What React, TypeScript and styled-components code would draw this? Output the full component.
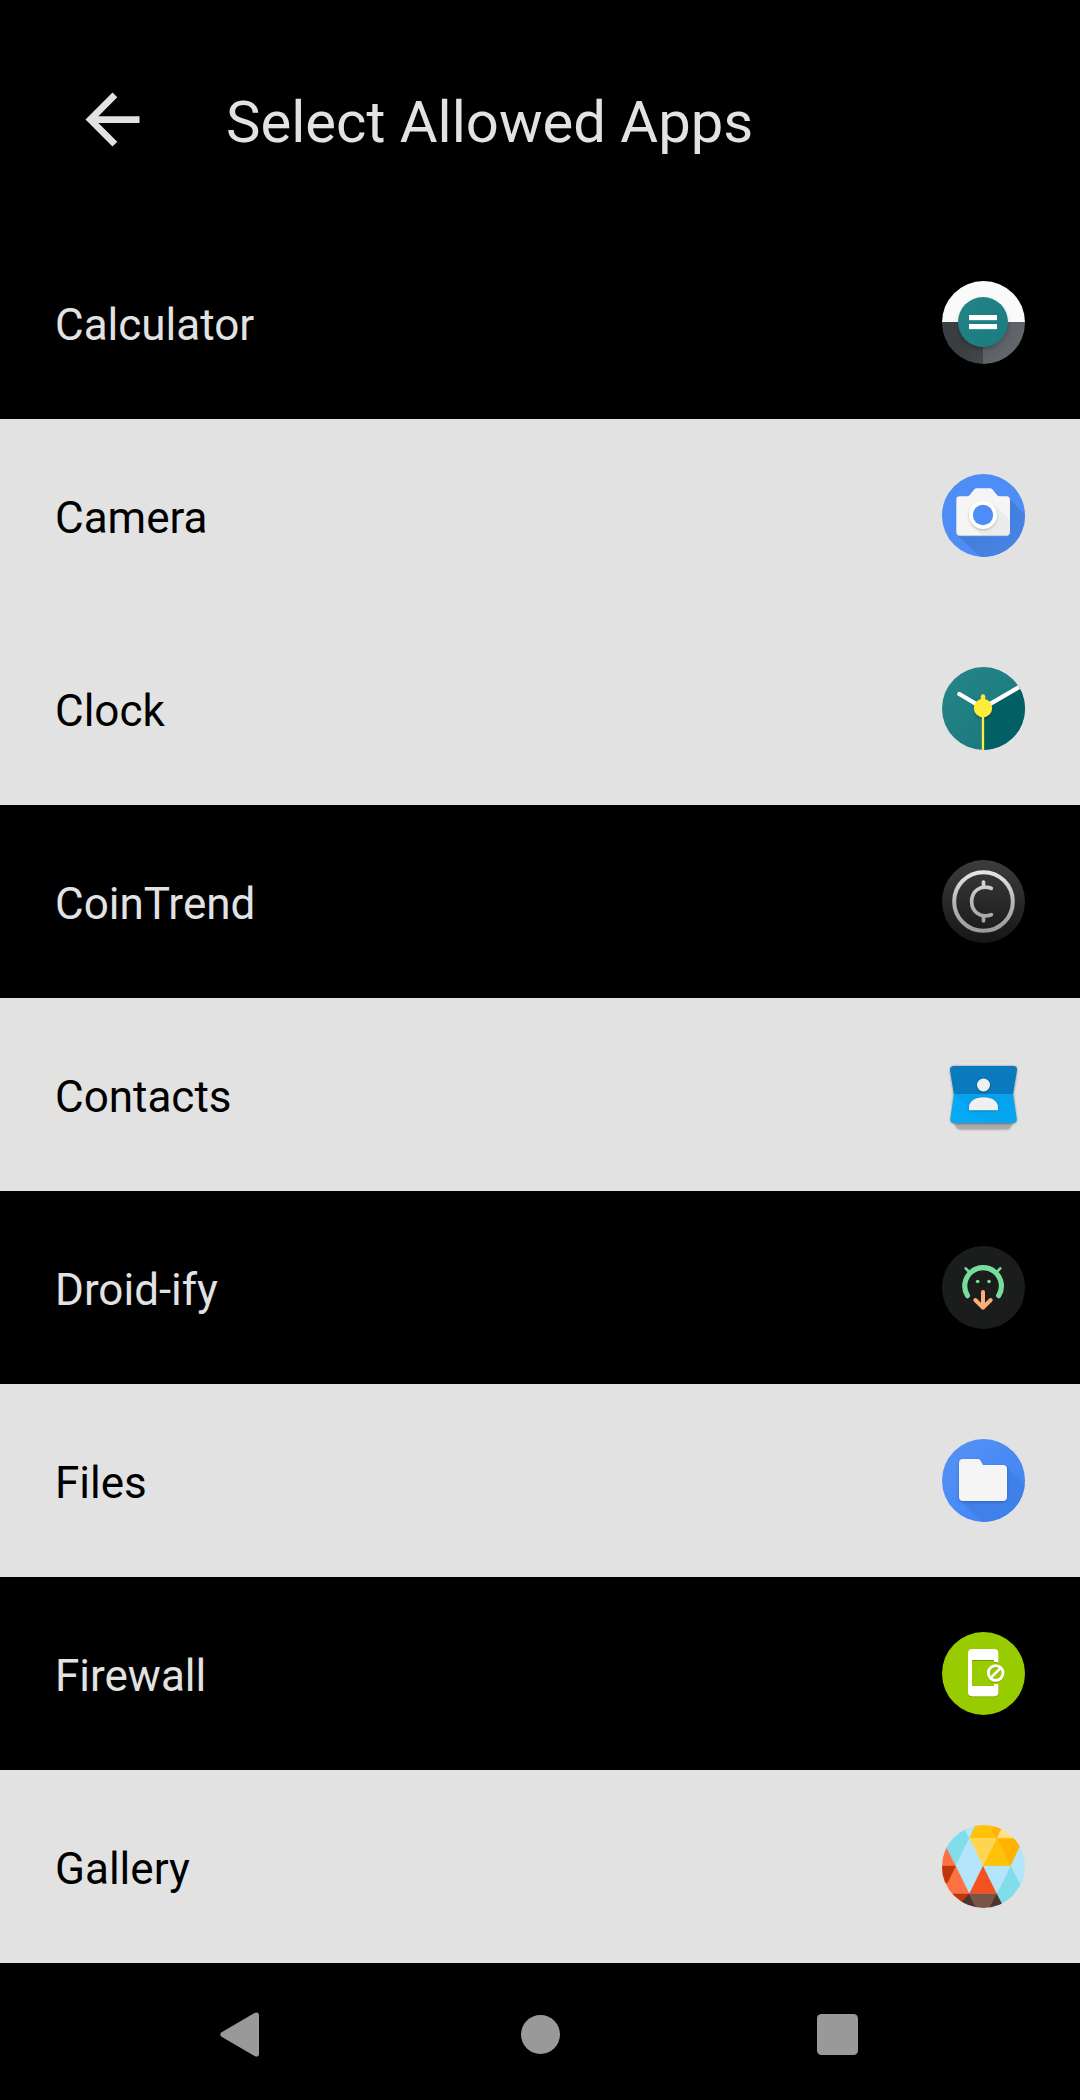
import React from "react";
import styled, { createGlobalStyle } from "styled-components";

const GlobalStyle = createGlobalStyle`
  body {
    margin: 0;
    background: #000;
    font-family: Roboto, "Noto Sans", sans-serif;
  }
`;

const Screen = styled.div`
  display: flex;
  flex-direction: column;
  width: 1080px;
  height: 2100px;
  overflow: hidden;
  background: #000;
  color: #e2e2e2;
`;

const TopBar = styled.header`
  box-sizing: border-box;
  display: flex;
  align-items: center;
  height: 226px;
  padding: 12px 72px 0;
  flex: none;
`;

const BackButton = styled.button`
  display: flex;
  padding: 0;
  margin: 0 73px 0 0;
  border: 0;
  background: none;
  color: inherit;
  svg {
    display: block;
    width: 81px;
    height: 81px;
  }
`;

const Title = styled.h1`
  margin: 5px 0 0;
  font-size: 58px;
  line-height: 76px;
  font-weight: 400;
  white-space: nowrap;
`;

const AppList = styled.ul`
  flex: none;
  margin: 0;
  padding: 0;
  list-style: none;
`;

const AppRow = styled.li<{ $selected: boolean }>`
  box-sizing: border-box;
  display: flex;
  align-items: center;
  justify-content: space-between;
  height: 193px;
  padding: 0 55px;
  background: ${(p) => (p.$selected ? "#e2e2e2" : "#000")};
  color: ${(p) => (p.$selected ? "#000" : "#e2e2e2")};
`;

const AppName = styled.span`
  padding-top: 4px;
  font-size: 44px;
  line-height: 60px;
`;

const IconSvg = styled.svg`
  display: block;
  width: 83px;
  height: 83px;
  overflow: visible;
`;

const NavBar = styled.nav`
  box-sizing: border-box;
  display: flex;
  align-items: center;
  justify-content: space-between;
  height: 137px;
  padding: 6px 222px 0 220px;
  flex: none;
`;

const NavGlyph = styled.svg<{ $w: number; $h: number }>`
  display: block;
  width: ${(p) => p.$w}px;
  height: ${(p) => p.$h}px;
  fill: #999;
`;

/* Every launcher icon shares one 249-unit square with a disc inscribed in it. */
const Icon = ({ children }: { children: React.ReactNode }) => (
  <IconSvg viewBox="36 33 249 249">{children}</IconSvg>
);

const Disc = ({ fill }: { fill: string }) => (
  <circle cx="160.5" cy="157.5" r="124.5" fill={fill} />
);

const DiscClip = ({ id }: { id: string }) => (
  <clipPath id={id}>
    <circle cx="160.5" cy="157.5" r="124.5" />
  </clipPath>
);

const CalculatorIcon = () => (
  <Icon>
    <defs>
      <DiscClip id="calc-clip" />
      <linearGradient id="calc-left" x1="0" y1="0" x2="1" y2="1">
        <stop offset="0" stopColor="#3c4043" />
        <stop offset=".5" stopColor="#3a3d40" />
        <stop offset="1" stopColor="#44484b" />
      </linearGradient>
      <linearGradient id="calc-right" x1="0" y1="0" x2="1" y2="1">
        <stop offset="0" stopColor="#54575c" />
        <stop offset=".6" stopColor="#62656b" />
      </linearGradient>
      <linearGradient id="calc-teal" x1="0" y1="0" x2="1" y2="1">
        <stop offset="0" stopColor="#238588" />
        <stop offset="1" stopColor="#1b7b7e" />
      </linearGradient>
      <filter id="calc-blur" x="-30%" y="-30%" width="160%" height="160%">
        <feGaussianBlur stdDeviation="6" />
      </filter>
    </defs>
    <g clipPath="url(#calc-clip)">
      <rect x="30" y="30" width="260" height="126" fill="#fafafa" />
      <rect x="30" y="156" width="129" height="130" fill="url(#calc-left)" />
      <rect x="159" y="156" width="130" height="130" fill="url(#calc-right)" />
      <circle cx="159" cy="164" r="74" fill="#000" opacity=".22" filter="url(#calc-blur)" />
    </g>
    <circle cx="159" cy="156" r="75" fill="url(#calc-teal)" />
    <rect x="117" y="135" width="84" height="15.5" fill="#fff" />
    <rect x="117" y="162" width="84" height="15.5" fill="#fff" />
  </Icon>
);

const CameraIcon = () => (
  <Icon>
    <defs>
      <DiscClip id="cam-clip" />
      <linearGradient id="cam-shade" gradientUnits="userSpaceOnUse" x1="170" y1="150" x2="250" y2="240">
        <stop offset="0" stopColor="#447cd8" />
        <stop offset="1" stopColor="#4683e3" />
      </linearGradient>
      <filter id="cam-blur" x="-30%" y="-30%" width="160%" height="160%">
        <feGaussianBlur stdDeviation="4" />
      </filter>
    </defs>
    <Disc fill="#4e8df5" />
    <path d="M232 103l70 68v130H172L82 216z" fill="url(#cam-shade)" clipPath="url(#cam-clip)" />
    <path
      d="M89 100h22q5 0 8-4l14-17q3-3 7-3h40q4 0 7 3l14 17q3 4 8 4h20q11 0 11 11v96q0 11-11 11H90q-11 0-11-11v-97q0-10 10-10z"
      fill="#f5f5f5"
    />
    <path d="M79 206q0 12 11 12h139q11 0 11-12" fill="none" stroke="#c8cbd2" strokeWidth="2" />
    <path d="M192 124l48 48v34q0 11-11 11h-73l-32-34z" fill="#000" opacity=".035" />
    <circle cx="159" cy="160" r="41" fill="#000" opacity=".25" filter="url(#cam-blur)" />
    <circle cx="159" cy="156" r="42" fill="#fff" />
    <circle cx="159" cy="156" r="30.5" fill="#4e8df5" />
  </Icon>
);

const ClockIcon = () => (
  <Icon>
    <defs>
      <DiscClip id="clock-clip" />
      <linearGradient id="clock-face" x1="0" y1="0" x2="1" y2="1">
        <stop offset="0" stopColor="#268689" />
        <stop offset="1" stopColor="#187579" />
      </linearGradient>
      <filter id="clock-blur" x="-30%" y="-30%" width="160%" height="160%">
        <feGaussianBlur stdDeviation="5" />
      </filter>
    </defs>
    <Disc fill="url(#clock-face)" />
    <g clipPath="url(#clock-clip)">
      <path d="M159 156L290 80v210H159z" fill="#006064" />
      <circle cx="159" cy="164" r="27" fill="#000" opacity=".22" filter="url(#clock-blur)" />
      <path d="M88 114l71 42L290 80" fill="none" stroke="#fff" strokeWidth="13" strokeLinecap="round" />
      <rect x="155.5" y="156" width="7" height="130" fill="#ffeb3b" />
    </g>
    <path d="M159 121v30" stroke="#ffeb3b" strokeWidth="13" strokeLinecap="round" />
    <circle cx="159" cy="156" r="27.5" fill="#ffeb3b" />
  </Icon>
);

const CoinTrendIcon = () => (
  <Icon>
    <defs>
      <linearGradient id="coin-bg" x1="0" y1="0" x2="0" y2="1">
        <stop offset="0" stopColor="#3c3c3e" />
        <stop offset=".5" stopColor="#29292a" />
        <stop offset="1" stopColor="#161616" />
      </linearGradient>
      <linearGradient id="coin-fg" gradientUnits="userSpaceOnUse" x1="0" y1="63" x2="0" y2="252">
        <stop offset="0" stopColor="#e8e8e8" />
        <stop offset=".5" stopColor="#b8b8b8" />
        <stop offset="1" stopColor="#999" />
      </linearGradient>
    </defs>
    <Disc fill="url(#coin-bg)" />
    <g fill="none" stroke="url(#coin-fg)">
      <circle cx="160.5" cy="157.5" r="88" strokeWidth="12" />
      <path
        d="M184 118C150 105 125 128 125 157.5s25 52 59 39.500M160.500 99v14M160.500 202v14"
        strokeWidth="11"
        strokeLinecap="round"
      />
    </g>
  </Icon>
);

const ContactsIcon = () => (
  <Icon>
    <defs>
      <linearGradient id="con-shadow" x1="0" y1="0" x2="0" y2="1">
        <stop offset="0" stopColor="#0a6ba8" />
        <stop offset="1" stopColor="#0a9fe9" />
      </linearGradient>
      <filter id="con-blur" x="-20%" y="-20%" width="140%" height="140%">
        <feGaussianBlur stdDeviation="3" />
      </filter>
    </defs>
    <path d="M73 71q6-15 16-15h143q10 0 16 15z" fill="#e3e3e3" stroke="#d2d2d2" strokeWidth="1.5" />
    <path d="M71 240l8 17q4 6 11 6h141q7 0 11-6l8-17z" fill="#aaa" filter="url(#con-blur)" />
    <path d="M73 240l7 15q4 7 11 7h139q7 0 11-7l7-15z" fill="#aaaaab" />
    <path
      d="M70 73h181q12 2 10 14l-11 70 10 73q1 13-10 15H70q-9-2-8-13l9-75-11-70q-1-12 10-14z"
      fill="#000"
      opacity=".4"
      filter="url(#con-blur)"
    />
    <path d="M71 72h180q11 1 10 12l-12 73H72L60 84q0-11 11-12z" fill="#0a7abf" />
    <path d="M72 156h177l11 74q1 12-10 13H71q-11-1-10-13z" fill="#05a9f4" />
    <path d="M72 156l6 3 82 84h90q11-1 10-13l-11-74z" fill="url(#con-shadow)" opacity=".12" />
    <g fill="#000" opacity=".3" filter="url(#con-blur)">
      <circle cx="160.5" cy="131" r="20" />
      <path d="M117 206c0-28 19-39 43.500-39s43.500 11 43.500 39z" />
    </g>
    <circle cx="160.5" cy="129" r="19.5" fill="#f0f0f0" />
    <path d="M117 205v-9c0-18 18-30 43.500-30s43.500 12 43.500 30v9z" fill="#f0f0f0" />
  </Icon>
);

const DroidifyIcon = () => (
  <Icon>
    <Disc fill="#1b1d1c" />
    <g fill="none" stroke="#77dc9d" strokeLinecap="round">
      <path d="M112.500 182A55 55 0 1 1 206 182" strokeWidth="15.5" />
      <path d="M107 100l12 12M211 100l-12 12" strokeWidth="8" />
    </g>
    <circle cx="143" cy="139.5" r="5.5" fill="#77dc9d" />
    <circle cx="177" cy="139.5" r="5.5" fill="#77dc9d" />
    <path
      d="M159 171v47M136 195l23 23 23-23"
      fill="none"
      stroke="#faaf77"
      strokeWidth="12"
      strokeLinecap="round"
      strokeLinejoin="round"
    />
  </Icon>
);

const FOLDER =
  "M99 93h45q4 0 7 4l8 14h60q12 0 12 12v84q0 12-12 12H99q-12 0-12-12V105q0-12 12-12z";

const FilesIcon = () => (
  <Icon>
    <defs>
      <DiscClip id="files-clip" />
      <linearGradient id="files-bg" x1="0.1" y1="0.1" x2=".8" y2=".8">
        <stop offset="0" stopColor="#5491f5" />
        <stop offset="1" stopColor="#4285f4" />
      </linearGradient>
      <filter id="files-blur" x="-20%" y="-20%" width="140%" height="140%">
        <feGaussianBlur stdDeviation="4" />
      </filter>
    </defs>
    <Disc fill="url(#files-bg)" />
    <path d="M228 114l70 68v120H174L88 214z" fill="#4081e9" clipPath="url(#files-clip)" />
    <path d={FOLDER} transform="translate(0 4)" fill="#1a3f85" opacity=".4" filter="url(#files-blur)" />
    <path d={FOLDER} fill="#f5f5f5" />
  </Icon>
);

const FirewallIcon = () => (
  <Icon>
    <defs>
      <filter id="fw-shadow" x="-20%" y="-20%" width="140%" height="140%">
        <feDropShadow dx="0" dy="2" stdDeviation="2" floodColor="#000" floodOpacity=".35" />
      </filter>
    </defs>
    <Disc fill="#99cc00" />
    <g filter="url(#fw-shadow)">
      <path
        d="M127 84h65q13 0 13 13v27q-6-2-13-1v-6h-66v78h66v-6q7 1 13-1v25q0 13-13 13h-65q-13 0-13-13V97q0-13 13-13z"
        fill="#fff"
      />
      <circle cx="197" cy="156" r="22" fill="none" stroke="#fff" strokeWidth="8.5" />
      <path d="M183 170l28-28" stroke="#fff" strokeWidth="8" />
    </g>
  </Icon>
);

const GALLERY_FACETS: [string, string][] = [
  ["M104 45L84 20 30 60 30 102 49 102 77 156 118 73z", "#80deea"],
  ["M104 45L118 25 140 25 118 73z", "#b3e5fc"],
  ["M140 25H220L201 73H118z", "#ffc20d"],
  ["M196 25H222L213 47 201 73 186 50z", "#ffb300"],
  ["M215 44L250 50 260 73H201z", "#ffe082"],
  ["M118 73H201L159 156z", "#ffd54f"],
  ["M201 73L242 156H159z", "#ffc10a"],
  ["M201 73H262L272 95 242 156z", "#ffb300"],
  ["M270 97L300 110V240L270 213 242 156z", "#b3e5fc"],
  ["M242 156L271 213 216 290 200 239z", "#80deea"],
  ["M159 156H242L200 239z", "#b3e5fc"],
  ["M118 73L159 156 118 239 77 156z", "#b3e5fc"],
  ["M49 101L77 156H30V101z", "#ff7043"],
  ["M77 156L118 239H30V156z", "#ff7043"],
  ["M30 156H77L53 206 30 206z", "#bf360c"],
  ["M50 239H118L105 270 70 280z", "#bf360c"],
  ["M159 156L200 239H118z", "#f4511e"],
  ["M118 239L138 279V290H90V270z", "#4e342e"],
  ["M118 239H200L180 290H140z", "#795548"],
  ["M200 239L216 270 205 290H175L180 279z", "#4e342e"],
];

const GalleryIcon = () => (
  <Icon>
    <defs>
      <DiscClip id="gal-clip" />
    </defs>
    <g clipPath="url(#gal-clip)">
      {GALLERY_FACETS.map(([d, fill]) => (
        <path key={d} d={d} fill={fill} stroke={fill} strokeWidth=".6" />
      ))}
    </g>
  </Icon>
);

const APPS = [
  { name: "Calculator", selected: false, Glyph: CalculatorIcon },
  { name: "Camera", selected: true, Glyph: CameraIcon },
  { name: "Clock", selected: true, Glyph: ClockIcon },
  { name: "CoinTrend", selected: false, Glyph: CoinTrendIcon },
  { name: "Contacts", selected: true, Glyph: ContactsIcon },
  { name: "Droid-ify", selected: false, Glyph: DroidifyIcon },
  { name: "Files", selected: true, Glyph: FilesIcon },
  { name: "Firewall", selected: false, Glyph: FirewallIcon },
  { name: "Gallery", selected: true, Glyph: GalleryIcon },
];

export default function App() {
  return (
    <Screen>
      <GlobalStyle />
      <TopBar>
        <BackButton>
          <svg viewBox="0 0 24 24" fill="currentColor">
            <path d="M20 11H7.830l5.590-5.590L12 4l-8 8 8 8 1.410-1.410L7.830 13H20z" />
          </svg>
        </BackButton>
        <Title>Select Allowed Apps</Title>
      </TopBar>
      <AppList>
        {APPS.map(({ name, selected, Glyph }) => (
          <AppRow key={name} $selected={selected}>
            <AppName>{name}</AppName>
            <Glyph />
          </AppRow>
        ))}
      </AppList>
      <NavBar>
        <NavGlyph $w={44} $h={45} viewBox="0 0 44 45">
          <path d="M1.600 20.200L34.500 1Q39 -1 39 3.500V41.500Q39 46 34.500 44L1.600 24.800Q-1 22.500 1.600 20.200z" />
        </NavGlyph>
        <NavGlyph $w={39} $h={39} viewBox="0 0 39 39">
          <circle cx="19.5" cy="19.5" r="19.5" />
        </NavGlyph>
        <NavGlyph $w={41} $h={41} viewBox="0 0 41 41">
          <rect width="41" height="41" rx="4.5" />
        </NavGlyph>
      </NavBar>
    </Screen>
  );
}
